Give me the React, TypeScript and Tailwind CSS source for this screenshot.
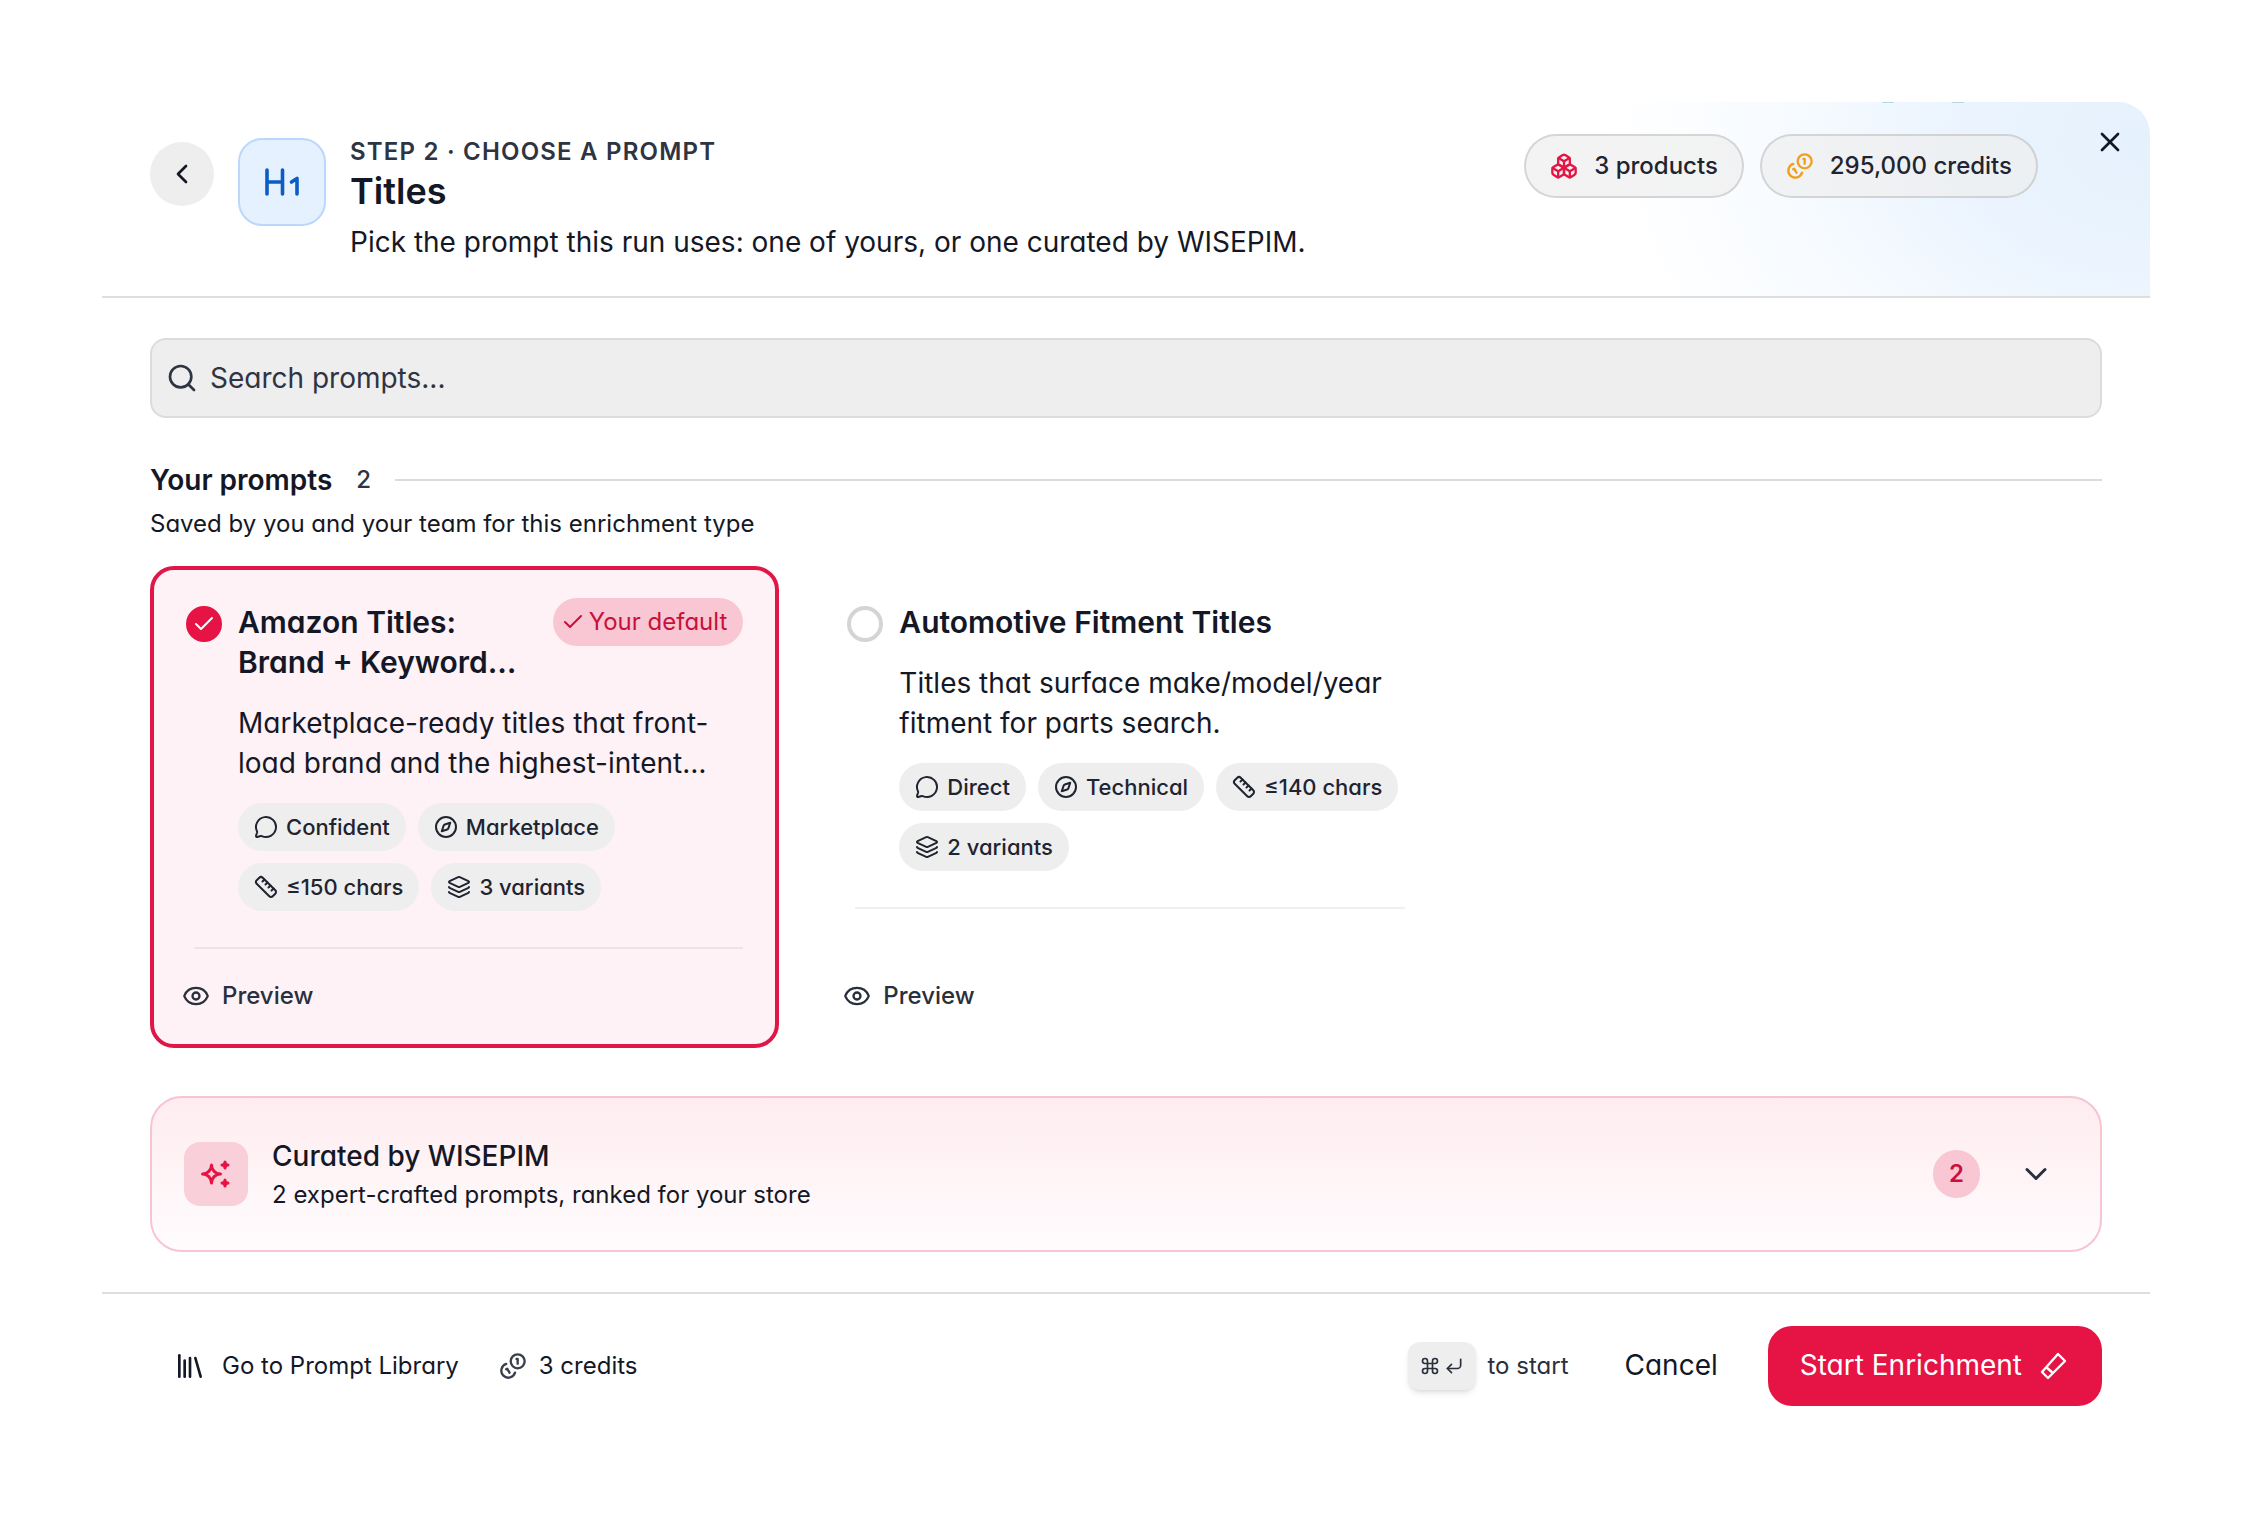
import React, { useState } from 'react'
import {
  Boxes,
  Check,
  ChevronDown,
  ChevronLeft,
  Command,
  Compass,
  CornerDownLeft,
  Eye,
  Layers,
  Library,
  MessageCircle,
  Ruler,
  Search,
  X,
  type LucideIcon,
} from 'lucide-react'
import { TbSparkles } from 'react-icons/tb'

type Prompt = {
  id: string
  title: string
  description: string
  isDefault: boolean
  tone: string
  style: string
  length: string
  variants: string
}

const prompts: Prompt[] = [
  {
    id: 'amazon',
    title: 'Amazon Titles: Brand + Keyword…',
    description: 'Marketplace-ready titles that front-load brand and the highest-intent…',
    isDefault: true,
    tone: 'Confident',
    style: 'Marketplace',
    length: '≤150 chars',
    variants: '3 variants',
  },
  {
    id: 'automotive',
    title: 'Automotive Fitment Titles',
    description: 'Titles that surface make/model/year fitment for parts search.',
    isDefault: false,
    tone: 'Direct',
    style: 'Technical',
    length: '≤140 chars',
    variants: '2 variants',
  },
]

const CoinsIcon = ({ className }: { className?: string }) => (
  <svg
    viewBox="0 0 24 24"
    className={className}
    fill="none"
    stroke="currentColor"
    strokeWidth="2"
    strokeLinecap="round"
    strokeLinejoin="round"
  >
    <path d="M13.744 17.736a6 6 0 1 1-7.48-7.48" />
    <path d="M15 6h1v4" />
    <path d="m6.134 14.768.866-.5 2 3.464" />
    <circle cx="16" cy="8" r="6" />
  </svg>
)

const Chip = ({ icon: Icon, label }: { icon: LucideIcon; label: string }) => (
  <li className="flex h-12 items-center gap-2 rounded-full bg-[#eeeeee] px-4 text-[22px] font-medium text-[#1f2430]">
    <Icon className="size-6" />
    {label}
  </li>
)

type PromptCardProps = {
  prompt: Prompt
  selected: boolean
  onSelect: () => void
}

const PromptCard = ({ prompt, selected, onSelect }: PromptCardProps) => (
  <article
    className={`flex flex-col rounded-3xl border-4 px-8 pt-7 pb-5 ${
      selected ? 'border-[#e01648] bg-[#fef2f6]' : 'border-transparent'
    }`}
  >
    <div className="flex gap-4">
      <span className="relative mt-2 size-9 shrink-0">
        <input
          type="radio"
          name="prompt"
          id={prompt.id}
          checked={selected}
          onChange={onSelect}
          className="block size-9 appearance-none rounded-full border-4 border-[#d4d4d4] checked:border-[#e61445] checked:bg-[#e61445]"
        />
        {selected && (
          <Check className="pointer-events-none absolute inset-0 m-auto size-6 text-white" />
        )}
      </span>
      <div className="min-w-0 flex-1">
        <div className="flex items-start justify-between gap-4">
          <label htmlFor={prompt.id} className="pt-1 text-[30px] leading-10 font-semibold">
            {prompt.title}
          </label>
          {prompt.isDefault && (
            <span className="flex h-12 shrink-0 items-center gap-1 rounded-full bg-[#f9c6d3] pr-4 pl-2 text-2xl text-[#c8103c]">
              <Check className="size-6" />
              Your default
            </span>
          )}
        </div>
        <p className="mt-[21px] text-[28px] leading-10">{prompt.description}</p>
        <ul className="mt-5 flex flex-wrap gap-3">
          <Chip icon={MessageCircle} label={prompt.tone} />
          <Chip icon={Compass} label={prompt.style} />
          <Chip icon={Ruler} label={prompt.length} />
          <Chip icon={Layers} label={prompt.variants} />
        </ul>
      </div>
    </div>
    <hr className="mt-9 mb-[19px] ml-2 border-t-2 border-black/6" />
    <button
      type="button"
      className="mt-auto -ml-1 flex h-14 items-center gap-3 self-start text-2xl font-medium text-[#2a2f3c]"
    >
      <Eye className="size-7" />
      Preview
    </button>
  </article>
)

const App = () => {
  const [selected, setSelected] = useState('amazon')

  return (
    <main className="min-h-screen bg-white p-[102px] font-['Inter',sans-serif] text-[#141826] [font-feature-settings:'cv11']">
      {/* Header */}
      <header className="relative flex items-start rounded-tr-[32px] border-b-2 border-[#dedede] bg-[radial-gradient(ellipse_540px_380px_at_100%_20%,#e5f1fd_0%,#ebf4fe_35%,#f7fbff_68%,#ffffff_100%)] px-12 pb-[34px]">
        {/* Feet of the clipped backdrop art */}
        <div className="absolute top-0 right-[186px] flex gap-[58px]">
          <span className="h-px w-3 rounded-b-full bg-[#b5d8dc]"></span>
          <span className="h-px w-3 rounded-b-full bg-[#b5d8dc]"></span>
        </div>
        <button
          type="button"
          aria-label="Back"
          className="mt-10 flex size-16 items-center justify-center rounded-full bg-[#eeeeee]"
        >
          <ChevronLeft className="size-8" />
        </button>
        <div className="mt-9 ml-6 flex size-[88px] items-center justify-center rounded-3xl border-2 border-[#b9d8fa] bg-[#e5f1fe] text-[#0b5cc4]">
          <svg
            viewBox="0 0 36 36"
            className="size-9"
            fill="none"
            stroke="currentColor"
            strokeWidth="3.6"
            strokeLinecap="round"
            strokeLinejoin="round"
          >
            <path d="M3 6v24M18.5 6v24M3 18h15.500M27.500 18l5.500-3.500V30" />
          </svg>
        </div>
        <div className="mt-[34px] ml-6 flex-1">
          <p className="text-2xl leading-8 font-semibold tracking-wider text-[#2f3442] uppercase">
            Step 2 · Choose a prompt
          </p>
          <h1 className="text-4xl leading-[46px] font-semibold">Titles</h1>
          <p className="mt-2 text-[28px] leading-10">
            Pick the prompt this run uses: one of yours, or one curated by WISEPIM.
          </p>
        </div>
        <div className="mt-8 flex gap-4 text-2xl font-medium text-[#1f2430]">
          <span className="flex h-16 items-center gap-4 rounded-full border-2 border-black/12 bg-[#eeeeee]/70 px-6">
            <Boxes className="size-7 text-[#e61445]" />
            3 products
          </span>
          <span className="flex h-16 items-center gap-4 rounded-full border-2 border-black/12 bg-[#eeeeee]/70 px-6">
            <CoinsIcon className="size-7 text-[#f0a020]" />
            295,000 credits
          </span>
        </div>
        <button type="button" aria-label="Close" className="mt-6 -mr-6 ml-14">
          <X className="size-8" />
        </button>
      </header>

      {/* Prompt list */}
      <section className="border-b-2 border-[#dedede] px-12 py-10">
        <label className="flex h-20 items-center gap-3 rounded-2xl border-2 border-[#dcdcdc] bg-[#eeeeee] px-3.5 text-[#2f3442]">
          <Search className="size-8" />
          <input
            type="search"
            aria-label="Search prompts"
            placeholder="Search prompts..."
            className="min-w-0 flex-1 text-[28px] outline-none placeholder:text-[#2f3442]"
          />
        </label>

        <div className="mt-[42px] flex items-center gap-3">
          <h2 className="text-[28px] leading-10 font-semibold">Your prompts</h2>
          <span className="px-3 text-2xl font-medium text-[#2f3442]">2</span>
          <div className="h-0.5 flex-1 bg-[#dcdcdc]"></div>
        </div>
        <p className="mt-1.5 text-2xl leading-9">Saved by you and your team for this enrichment type</p>

        <div className="mt-6 grid grid-cols-3 gap-8">
          {prompts.map((prompt) => (
            <PromptCard
              key={prompt.id}
              prompt={prompt}
              selected={selected === prompt.id}
              onSelect={() => setSelected(prompt.id)}
            />
          ))}
        </div>

        <button
          type="button"
          className="mt-12 flex w-full items-center rounded-[32px] border-2 border-[#f7c4d1] bg-linear-to-b from-[#feecf0] to-[#fffcfd] px-8 py-9 text-left"
        >
          <span className="flex size-16 items-center justify-center rounded-2xl bg-[#f9d0da] text-[#e61445]">
            <TbSparkles className="size-9" />
          </span>
          <span className="ml-6 flex-1 pt-0.5">
            <span className="block text-[28px] leading-10 font-medium">Curated by WISEPIM</span>
            <span className="block text-2xl leading-[38px]">
              2 expert-crafted prompts, ranked for your store
            </span>
          </span>
          <span className="flex h-12 items-center rounded-full bg-[#f9c6d3] px-4 text-2xl font-semibold text-[#c8103c]">
            2
          </span>
          <span className="ml-6 flex size-16 items-center justify-center text-[#2a2f3c]">
            <ChevronDown className="size-9" />
          </span>
        </button>
      </section>

      {/* Footer */}
      <footer className="flex items-center px-12 pt-8 text-2xl">
        <a href="#library" className="ml-6 flex items-center gap-4">
          <Library className="size-8" />
          Go to Prompt Library
        </a>
        <span className="ml-10 flex items-center gap-3">
          <CoinsIcon className="size-7 text-[#3a3f4b]" />
          3 credits
        </span>
        <span className="ml-auto flex items-center gap-3 text-[#2a2f3c]">
          <kbd className="flex h-12 items-center gap-1 rounded-xl bg-[#eeeeee] px-3 font-[inherit] shadow-md shadow-black/10">
            <Command className="size-5" />
            <CornerDownLeft className="size-5" />
          </kbd>
          to start
        </span>
        <button type="button" className="ml-14 text-[28px]">
          Cancel
        </button>
        <button
          type="button"
          className="ml-[50px] flex h-20 items-center gap-4 rounded-3xl bg-[#e61445] px-8 text-[28px] text-white"
        >
          Start Enrichment
          <svg
            viewBox="0 0 32 32"
            className="size-8"
            fill="none"
            stroke="currentColor"
            strokeWidth="2.4"
            strokeLinejoin="round"
          >
            <path d="m20 4 7 7-17 17-6-6zM8 17l7 6" />
          </svg>
        </button>
      </footer>
    </main>
  )
}

export default App
